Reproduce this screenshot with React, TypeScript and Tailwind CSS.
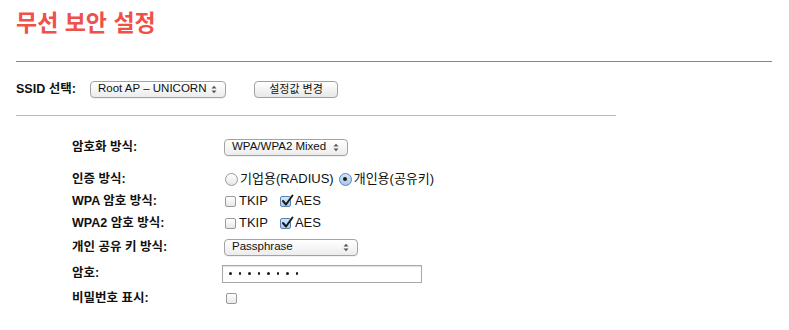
import type { ReactNode } from "react";

const FONT = {
  fontFamily: '"Liberation Sans", "Noto Sans CJK KR", sans-serif',
};

// up/down arrows at the right of a mac-style popup
const SelectArrows = () => (
  <svg width="6" height="9" viewBox="0 0 6 9" className="shrink-0">
    <path d="M0.5 3.5 L3 0.8 L5.5 3.5 Z" fill="#555" />
    <path d="M0.5 5.5 L3 8.2 L5.5 5.5 Z" fill="#555" />
  </svg>
);

const FakeSelect = ({ value, width }: { value: string; width: string }) => (
  <div
    className={`${width} h-[17px] flex items-center justify-between pl-[7px] pr-[8px] rounded-[4px] border border-[#a3a3a3] bg-gradient-to-b from-white to-[#ececec] shadow-[0_1px_0_rgba(0,0,0,0.05)] text-[11.5px] text-[#111] leading-none`}
  >
    <span>{value}</span>
    <SelectArrows />
  </div>
);

const Radio = ({ checked }: { checked?: boolean }) => (
  <span
    className={`w-[13px] h-[13px] rounded-full border flex items-center justify-center shrink-0 ${
      checked
        ? "border-[#5a82b4] bg-gradient-to-b from-[#d6e6f7] to-[#a9c8ec]"
        : "border-[#9a9a9a] bg-gradient-to-b from-white to-[#e6e6e6]"
    }`}
  >
    {checked && <span className="w-[4px] h-[4px] rounded-full bg-[#1a1a1a]" />}
  </span>
);

const Check = ({ checked }: { checked?: boolean }) => (
  <span
    className={`relative w-[11px] h-[11px] rounded-[2px] border shrink-0 ${
      checked
        ? "border-[#5a82b4] bg-gradient-to-b from-[#d6e6f7] to-[#a9c8ec]"
        : "border-[#9a9a9a] bg-gradient-to-b from-white to-[#e8e8e8]"
    }`}
  >
    {checked && (
      <svg
        width="13"
        height="13"
        viewBox="0 0 13 13"
        className="absolute left-[0px] top-[-3px]"
      >
        <path
          d="M2 7 L5 10.5 L11.5 1.5"
          stroke="#1a1a1a"
          strokeWidth="2"
          fill="none"
          strokeLinecap="round"
          strokeLinejoin="round"
        />
      </svg>
    )}
  </span>
);

const Row = ({
  label,
  h,
  className = "",
  children,
}: {
  label: string;
  h: string;
  className?: string;
  children: ReactNode;
}) => (
  <div className={`flex items-center ${h} ${className}`}>
    <div className="w-[150px] text-[12.5px] font-bold text-[#111]">{label}</div>
    <div className="flex items-center">{children}</div>
  </div>
);

export default function App() {
  return (
    <div className="w-[789px] h-[330px] bg-white overflow-hidden" style={FONT}>
      <div className="px-4">
        {/* Title */}
        <h1 className="pt-[9px] text-[23px] leading-[28px] font-bold text-[#f0504a]">
          무선 보안 설정
        </h1>

        <div className="mt-[24px] mr-[1px] h-px bg-[#858585]" />

        {/* SSID */}
        <div className="mt-[17px] h-[20px] flex items-center">
          <span className="w-[74px] text-[12.5px] font-bold text-[#111]">SSID 선택:</span>
          <FakeSelect value="Root AP – UNICORN" width="w-[136px]" />
          <button className="ml-[28px] w-[84px] h-[17px] rounded-[4px] border border-[#a0a0a0] bg-gradient-to-b from-white to-[#e8e8e8] text-[11px] text-[#111] leading-none">
            설정값 변경
          </button>
        </div>

        <div className="mt-[16px] w-[600px] h-px bg-[#b7b5e1]" />

        {/* Form */}
        <div className="pl-[56px] mt-[20px]">
          <Row label="암호화 방식:" h="h-[22px]">
            <div className="pl-[2px]">
              <FakeSelect value="WPA/WPA2 Mixed" width="w-[124px]" />
            </div>
          </Row>

          <Row label="인증 방식:" h="h-[22px]" className="mt-[10px]">
            <label className="flex items-center gap-[2px] pl-[3px] text-[13px] text-[#111]">
              <Radio />
              <span>기업용(RADIUS)</span>
            </label>
            <label className="flex items-center gap-[2px] ml-[5px] text-[13px] text-[#111]">
              <Radio checked />
              <span>개인용(공유키)</span>
            </label>
          </Row>

          <Row label="WPA 암호 방식:" h="h-[22px]">
            <label className="flex items-center gap-[3px] pl-[3px] text-[13px] text-[#111]">
              <Check />
              <span>TKIP</span>
            </label>
            <label className="flex items-center gap-[4px] ml-[12px] text-[13px] text-[#111]">
              <Check checked />
              <span>AES</span>
            </label>
          </Row>

          <Row label="WPA2 암호 방식:" h="h-[22px]">
            <label className="flex items-center gap-[3px] pl-[3px] text-[13px] text-[#111]">
              <Check />
              <span>TKIP</span>
            </label>
            <label className="flex items-center gap-[4px] ml-[12px] text-[13px] text-[#111]">
              <Check checked />
              <span>AES</span>
            </label>
          </Row>

          <Row label="개인 공유 키 방식:" h="h-[26px]">
            <div className="pl-[2px]">
              <FakeSelect value="Passphrase" width="w-[134px]" />
            </div>
          </Row>

          <Row label="암호:" h="h-[27px]">
            <div className="w-[200px] h-[18px] border border-[#a8a8a8] shadow-[inset_0_1px_1px_rgba(0,0,0,0.12)] flex items-center pl-[6px] gap-[7px]">
              {Array.from({ length: 8 }).map((_, i) => (
                <span key={i} className="w-[2.5px] h-[2.5px] rounded-full bg-[#1a1a1a]" />
              ))}
            </div>
          </Row>

          <Row label="비밀번호 표시:" h="h-[22px]">
            <div className="pl-[4px] flex items-center">
              <Check />
            </div>
          </Row>
        </div>
      </div>
    </div>
  );
}
